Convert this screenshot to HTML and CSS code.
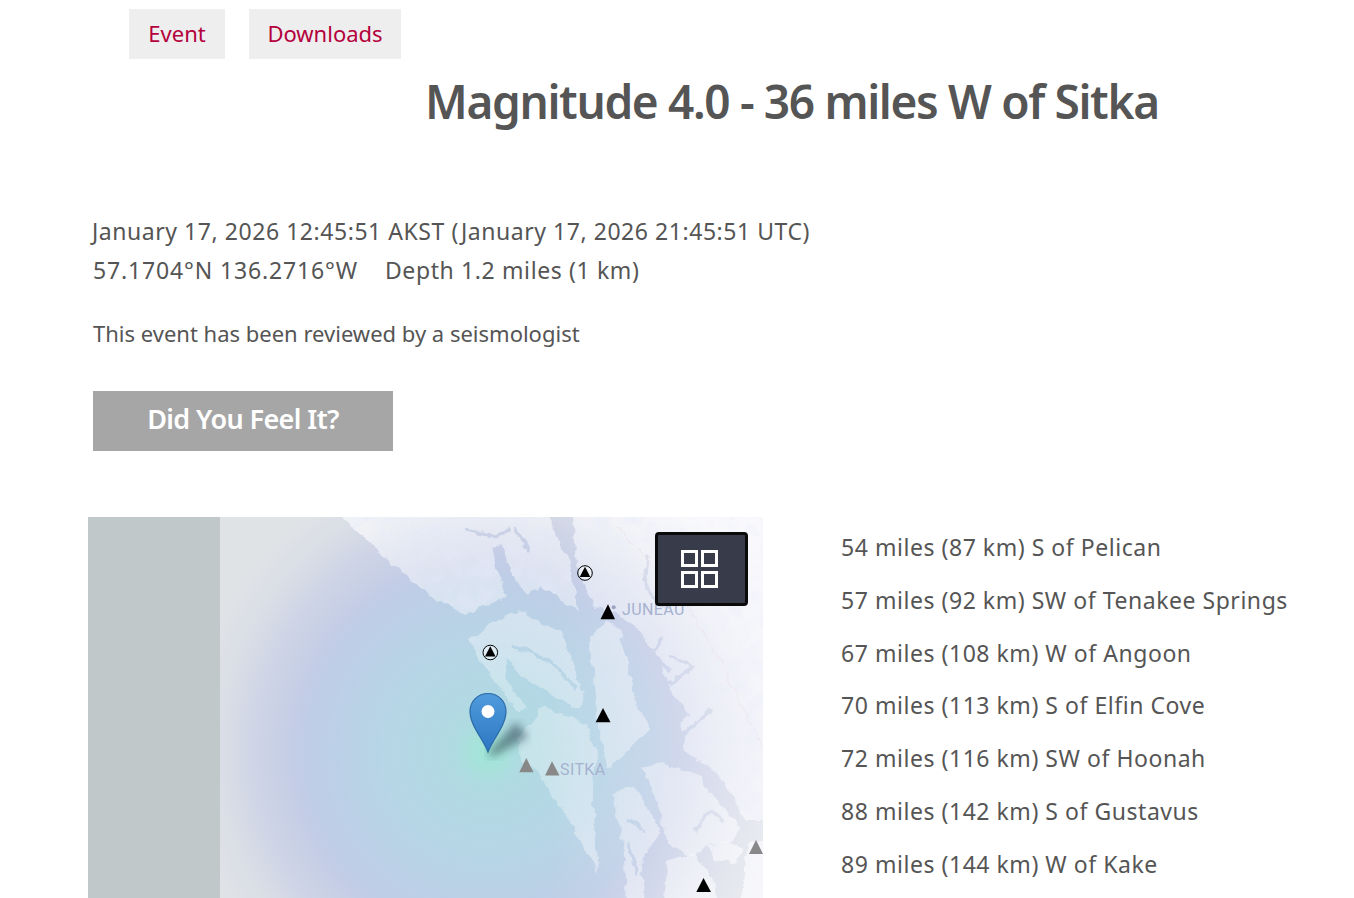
FILE: index.html
```html
<!DOCTYPE html>
<html lang="en">
<head>
<meta charset="utf-8">
<title>Magnitude 4.0 - 36 miles W of Sitka</title>
<link rel="stylesheet" href="styles.css">
</head>
<body>
<nav class="tabs">
  <a class="tab" href="#">Event</a>
  <a class="tab" href="#">Downloads</a>
</nav>
<h1 class="title">Magnitude 4.0 - 36 miles W of Sitka</h1>
<section class="info">
  <p class="time">January 17, 2026 12:45:51 AKST (January 17, 2026 21:45:51 UTC)</p>
  <p class="coords"><span class="latlon">57.1704°N 136.2716°W</span><span>Depth 1.2 miles (1 km)</span></p>
  <p class="review">This event has been reviewed by a seismologist</p>
  <a class="dyfi" href="#">Did You Feel It?</a>
</section>
<section class="bottom">
  <div class="map">
    <div class="band"></div>
    <svg class="canvas" width="543" height="381" viewBox="0 0 543 381" xmlns="http://www.w3.org/2000/svg">
      <defs>
        <radialGradient id="heat" gradientUnits="userSpaceOnUse" cx="268" cy="235" r="300">
          <stop offset="0" stop-color="#9fe6d6"/>
          <stop offset=".05" stop-color="#a6e2da"/>
          <stop offset=".12" stop-color="#b0dae2"/>
          <stop offset=".33" stop-color="#b6d6e6"/>
          <stop offset=".57" stop-color="#bdcee6"/>
          <stop offset=".63" stop-color="#c2cce6"/>
          <stop offset=".77" stop-color="#ced4e6"/>
          <stop offset=".89" stop-color="#dadee6"/>
          <stop offset="1" stop-color="#e0e3e6"/>
        </radialGradient>
        <radialGradient id="landfill" gradientUnits="userSpaceOnUse" cx="180" cy="725" r="1050">
          <stop offset="0" stop-color="#fff" stop-opacity=".24"/>
          <stop offset=".3" stop-color="#fff" stop-opacity=".34"/>
          <stop offset=".6" stop-color="#fff" stop-opacity=".48"/>
          <stop offset=".75" stop-color="#fff" stop-opacity=".65"/>
          <stop offset=".9" stop-color="#fff" stop-opacity=".85"/>
          <stop offset="1" stop-color="#fff" stop-opacity=".94"/>
        </radialGradient>
        <linearGradient id="eastfade" x1="0" y1="0" x2="1" y2="0">
          <stop offset="0" stop-color="#f4f4fc" stop-opacity="0"/>
          <stop offset="1" stop-color="#f4f4fc" stop-opacity=".45"/>
        </linearGradient>
        <linearGradient id="pin" x1="0" y1="0" x2="0" y2="1">
          <stop offset="0" stop-color="#4f9bdc"/>
          <stop offset="1" stop-color="#2d77c2"/>
        </linearGradient>
        <filter id="coast" filterUnits="userSpaceOnUse" x="-400" y="-150" width="1700" height="1500">
          <feTurbulence type="fractalNoise" baseFrequency=".028" numOctaves="3" seed="4" result="n"/>
          <feDisplacementMap in="SourceGraphic" in2="n" scale="26" xChannelSelector="R" yChannelSelector="G"/>
          <feGaussianBlur stdDeviation="1.200"/>
        </filter>
        <filter id="mottle" filterUnits="userSpaceOnUse" x="-400" y="-150" width="1700" height="1500">
          <feTurbulence type="fractalNoise" baseFrequency=".02" numOctaves="3" seed="9"/>
          <feColorMatrix type="matrix" values="0 0 0 0 .78  0 0 0 0 .81  0 0 0 0 .95  1.200 0 0 0 -.48" result="m"/>
          <feComposite in="m" in2="SourceAlpha" operator="in"/>
        </filter>
        <filter id="shade"><feGaussianBlur stdDeviation="4.500"/></filter>
        <mask id="inlets" maskUnits="userSpaceOnUse" x="-400" y="-150" width="1700" height="1500">
          <rect x="-400" y="-150" width="1700" height="1500" fill="#fff"/>
          <g fill="none" stroke="#000" stroke-width="10" stroke-linejoin="round" stroke-linecap="round">
            <path d="M255 410L340 440L400 490L440 530"/>
            <path d="M270 505L350 560L430 610"/>
            <path d="M580 390L610 470L650 530"/>
            <path d="M730 440L800 470L720 520"/>
            <path d="M700 380L680 430L720 480"/>
            <path d="M120 60L200 80L240 60"/>
            <path d="M800 960L850 900L880 930"/>
            <path d="M600 930L650 960"/>
            <path d="M300 120L260 60"/>
            <path d="M740 700L800 640L850 600"/>
            <path d="M660 140L650 240L720 300"/>
            <path d="M600 1000L630 1090"/>
          </g>
        </mask>
      </defs>
      <rect width="543" height="381" fill="url(#heat)"/>
      <g transform="translate(208 -7) scale(.33333)" filter="url(#coast)">
        <g mask="url(#inlets)">
          <g fill="url(#landfill)">
            <path d="M-340 -60L345 -60L360 21L385 80L425 150L440 260L450 300L400 270L340 225L300 255L250 190L225 105L190 110L205 190L240 260L170 290L110 315L0 249L-111 159Z"/>
            <path d="M125 395L190 340L270 300L330 340L400 365L440 480L470 560L450 600L380 560L280 500L235 440L240 520L300 600L265 600L180 490Z"/>
            <path d="M270 680L300 650L340 590L420 620L480 650L510 740L490 800L510 1090L440 960L360 840L330 780L280 760Z"/>
            <path d="M480 390L530 330L580 360L620 560L665 660L600 720L540 780L510 650L500 500Z"/>
            <path d="M425 -60L1120 -60L1120 930L950 930L880 800L770 720L760 640L790 620L720 530L700 450L630 360L570 310L500 290L445 170Z"/>
            <path d="M640 770L700 760L800 790L860 860L940 950L900 1000L860 1000L790 1040L720 1000L690 880Z"/>
            <path d="M560 850L620 830L700 960L640 1050L660 1250L600 1250L590 1020L570 940Z"/>
            <path d="M720 1050L800 1030L850 1100L900 1250L700 1250Z"/>
            <path d="M840 1010L900 990L950 1020L920 1060L860 1050Z"/>
            <path d="M960 1000L1120 960L1120 1250L930 1250Z"/>
          </g>
          <g filter="url(#mottle)">
            <path d="M-340 -60L345 -60L360 21L385 80L425 150L440 260L450 300L400 270L340 225L300 255L250 190L225 105L190 110L205 190L240 260L170 290L110 315L0 249L-111 159Z"/>
            <path d="M425 -60L1120 -60L1120 930L950 930L880 800L770 720L760 640L790 620L720 530L700 450L630 360L570 310L500 290L445 170Z"/>
          </g>
        </g>
        <path d="M570 50L780 290L900 500L1005 720" fill="none" stroke="#e8d6de" stroke-width="2"/>
      </g>
      <rect class="east" x="330" y="0" width="213" height="381" fill="url(#eastfade)"/>
      <path class="shadow" d="M268 236L296 205L308 220L272 240Z" filter="url(#shade)"/>
      <g class="peaks">
        <path d="M380.500 102.300L388 87.300L395 102.300Z"/>
        <path d="M375.700 205.300L383 191L390.500 205.300Z"/>
        <path d="M476.300 375L483.500 361L491 375Z"/>
        <circle cx="365" cy="56" r="7.300" class="ring"/>
        <path d="M359.700 60L365 49.800L370.300 60Z"/>
        <circle cx="270.300" cy="135.500" r="7.300" class="ring"/>
        <path d="M265 139.500L270.300 129.300L275.600 139.500Z"/>
      </g>
      <g class="peaks-old">
        <path d="M299.300 255.300L306.300 241L313.500 255.300Z"/>
        <path d="M325 258.500L332 244.300L339.500 258.500Z"/>
        <path d="M529 337L536 323L543 337Z"/>
      </g>
      <circle class="city-dot" cx="393.700" cy="90.300" r="2"/>
      <text class="city" x="402" y="98">JUNEAU</text>
      <text class="city" x="340" y="257.500">SITKA</text>
      <path d="M268 235C263 222 250 208 250 194.500C250 184 258 176.500 268 176.500C278 176.500 286 184 286 194.500C286 208 273 222 268 235Z" fill="url(#pin)" stroke="#2a6aa8" stroke-width="1.200"/>
      <circle cx="268" cy="194.500" r="6.500" fill="#fff"/>
    </svg>
    <button class="layers" aria-label="Layers">
      <svg width="37" height="38" viewBox="0 0 37 38" fill="none" stroke="#fff" stroke-width="3"><rect x="1.500" y="1.500" width="14" height="14"/><rect x="21.500" y="1.500" width="14" height="14"/><rect x="1.500" y="22.500" width="14" height="14"/><rect x="21.500" y="22.500" width="14" height="14"/></svg>
    </button>
  </div>
  <ul class="places">
    <li>54 miles (87 km) S of Pelican</li>
    <li>57 miles (92 km) SW of Tenakee Springs</li>
    <li>67 miles (108 km) W of Angoon</li>
    <li>70 miles (113 km) S of Elfin Cove</li>
    <li>72 miles (116 km) SW of Hoonah</li>
    <li>88 miles (142 km) S of Gustavus</li>
    <li>89 miles (144 km) W of Kake</li>
  </ul>
</section>
</body>
</html>
```

FILE: styles.css
```css
html, body {
  margin: 0;
  height: 898px;
  overflow: hidden;
  background: #fff;
  color: #555;
  font-family: "Noto Sans", "Liberation Sans", sans-serif;
}

.tabs {
  display: flex;
  gap: 24px;
  padding: 9px 0 0 129px;
}

.tab {
  display: block;
  height: 50px;
  line-height: 48px;
  background: #eee;
  color: #b4003c;
  text-decoration: none;
  font-size: 22px;
  text-align: center;
}

.tab:nth-child(1) { width: 96px; }
.tab:nth-child(2) { width: 152px; }

.title {
  margin: 10px 0 0 425px;
  font-size: 46px;
  line-height: 64px;
  font-weight: 600;
  letter-spacing: -1.350px;
  white-space: nowrap;
  color: #555;
}

.info {
  padding: 78px 0 0 93px;
}

.info p {
  margin: 0;
  white-space: nowrap;
}

.time {
  font-size: 23px;
  line-height: 40px;
  letter-spacing: .550px;
  margin-left: -1px !important;
}

.coords {
  display: flex;
  gap: 27px;
  font-size: 23px;
  line-height: 39px;
  letter-spacing: .620px;
}

.latlon {
  letter-spacing: .850px;
}

.review {
  padding-top: 24px;
  font-size: 22px;
  line-height: 39px;
}

.dyfi {
  display: block;
  width: 300px;
  height: 60px;
  line-height: 56px;
  margin-top: 38px;
  background: #a6a6a6;
  color: #fff;
  font-size: 27px;
  font-weight: 600;
  letter-spacing: -.600px;
  text-align: center;
  text-decoration: none;
}

.bottom {
  display: flex;
  padding: 66px 0 0 88px;
}

.map {
  position: relative;
  display: flex;
  width: 675px;
  height: 381px;
  flex: none;
}

.band {
  width: 132px;
  background: #c0c8ca;
}

.canvas {
  display: block;
}

.layers {
  position: absolute;
  top: 15px;
  right: 15px;
  width: 93px;
  height: 74px;
  padding: 0 4px 1px 0;
  border: 3px solid #0a0a0a;
  border-radius: 4px;
  background: #383c4a;
  display: flex;
  align-items: center;
  justify-content: center;
}

.peaks path { fill: #000; }
.peaks .ring { fill: rgba(255, 255, 255, .35); stroke: #000; stroke-width: 1; }
.peaks-old path { fill: #888; }
.shadow { fill: #1c3540; opacity: .5; }
.city { font-family: Roboto, sans-serif; font-size: 16px; letter-spacing: .4px; fill: #a6b2d0; }
.city-dot { fill: #9aa4c0; }

.places {
  list-style: none;
  margin: 0 0 0 78px;
  padding: 4px 0 0;
  font-size: 23px;
  letter-spacing: .540px;
  white-space: nowrap;
}

.places li {
  line-height: 52.800px;
}
```
